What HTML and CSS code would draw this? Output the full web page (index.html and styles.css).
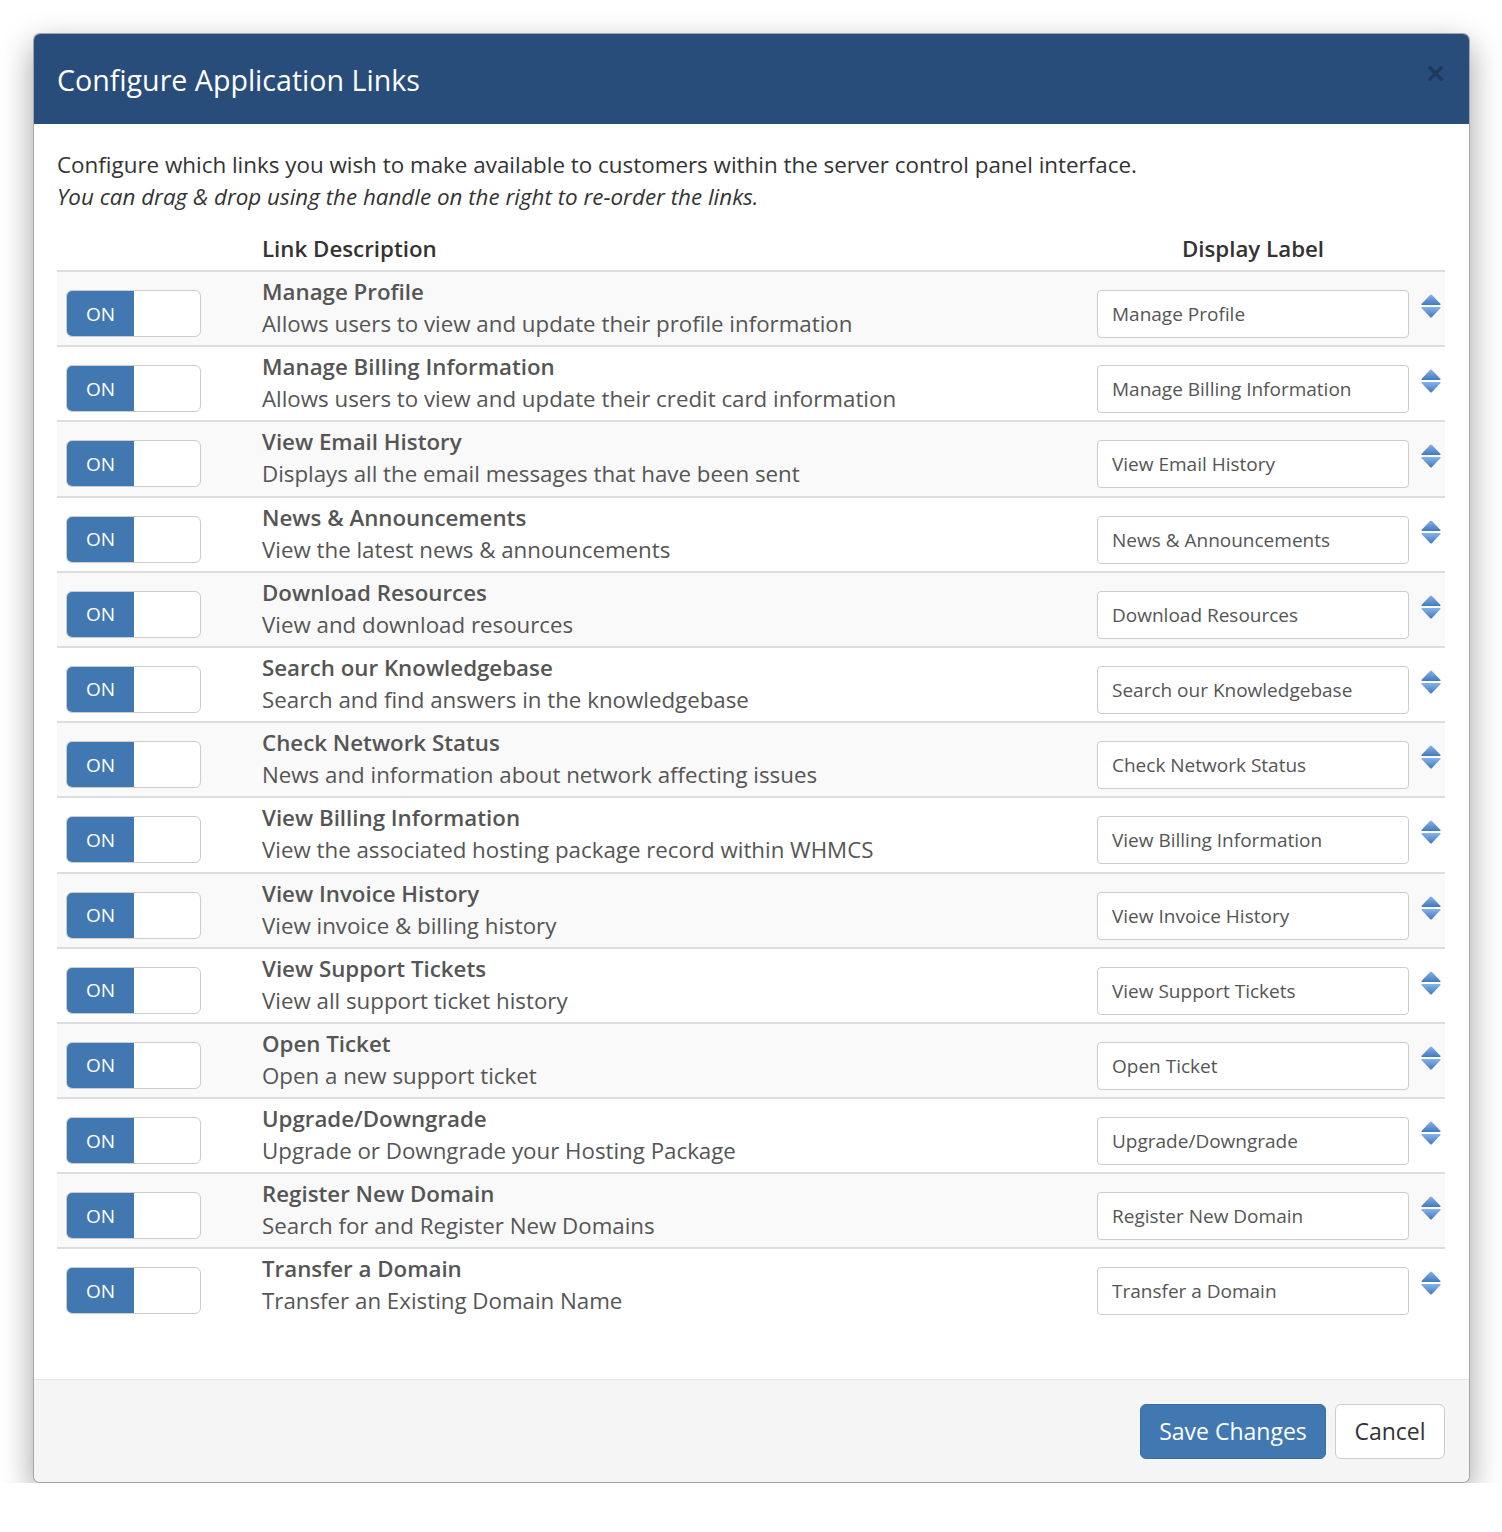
FILE: index.html
```html
<!DOCTYPE html>
<html lang="en">
<head>
  <meta charset="UTF-8">
  <title>Configure Application Links</title>
  <link rel="stylesheet" href="styles.css">
</head>
<body>
  <div class="modal">
    <div class="modal-header">
      <h2>Configure Application Links</h2>
      <button class="close" type="button">&times;</button>
    </div>
    <div class="modal-body">
      <p class="intro">Configure which links you wish to make available to customers within the server control panel interface.<br>
        <em>You can drag &amp; drop using the handle on the right to re-order the links.</em></p>
      <table class="links">
        <thead>
          <tr>
            <th class="col-switch"></th>
            <th class="col-desc">Link Description</th>
            <th class="col-label">Display Label</th>
            <th class="col-handle"></th>
          </tr>
        </thead>
        <tbody id="linkRows"></tbody>
      </table>
    </div>
    <div class="modal-footer">
      <button class="btn btn-primary" type="button">Save Changes</button>
      <button class="btn btn-default" type="button">Cancel</button>
    </div>
  </div>
  <script>
    // links shown in the list
    const links = [
      ["Manage Profile", "Allows users to view and update their profile information"],
      ["Manage Billing Information", "Allows users to view and update their credit card information"],
      ["View Email History", "Displays all the email messages that have been sent"],
      ["News & Announcements", "View the latest news & announcements"],
      ["Download Resources", "View and download resources"],
      ["Search our Knowledgebase", "Search and find answers in the knowledgebase"],
      ["Check Network Status", "News and information about network affecting issues"],
      ["View Billing Information", "View the associated hosting package record within WHMCS"],
      ["View Invoice History", "View invoice & billing history"],
      ["View Support Tickets", "View all support ticket history"],
      ["Open Ticket", "Open a new support ticket"],
      ["Upgrade/Downgrade", "Upgrade or Downgrade your Hosting Package"],
      ["Register New Domain", "Search for and Register New Domains"],
      ["Transfer a Domain", "Transfer an Existing Domain Name"]
    ];

    const handleSvg = `
      <svg width="22" height="26" viewBox="0 0 22 26">
        <defs>
          <linearGradient id="hg" x1="0" y1="0" x2="0" y2="1">
            <stop offset="0" stop-color="#86b3e8"/>
            <stop offset="1" stop-color="#4379bd"/>
          </linearGradient>
        </defs>
        <path d="M10 2 Q11 1 12 2 L20.3 10.8 Q21.2 12 19.8 12 L2.2 12 Q0.8 12 1.7 10.8 Z" fill="url(#hg)"/>
        <path d="M2.2 14 L19.8 14 Q21.2 14 20.3 15.2 L12 24 Q11 25 10 24 L1.7 15.2 Q0.8 14 2.2 14 Z" fill="url(#hg)"/>
      </svg>`;

    const esc = s => s.replace(/&/g, "&amp;").replace(/"/g, "&quot;");

    const tbody = document.getElementById("linkRows");
    links.forEach(([title, desc]) => {
      const tr = document.createElement("tr");
      tr.innerHTML = `
        <td class="col-switch">
          <div class="switch"><span class="switch-on">ON</span><span class="switch-off"></span></div>
        </td>
        <td class="col-desc">
          <div class="link-title">${esc(title)}</div>
          <div class="link-text">${esc(desc)}</div>
        </td>
        <td class="col-label"><input type="text" value="${esc(title)}"></td>
        <td class="col-handle"><span class="handle">${handleSvg}</span></td>
      `;
      tbody.appendChild(tr);
    });
  </script>
</body>
</html>
```

FILE: styles.css
```css
body {
  margin: 0;
  background: #fff;
  font-family: 'Open Sans', 'Noto Sans', Arial, sans-serif;
  color: #333;
}
.modal {
  margin: 33px 32px 0 33px;
  width: 1437px;
  border: 1px solid rgba(0, 0, 0, 0.35);
  border-radius: 7px;
  box-shadow: 0 12px 32px rgba(0, 0, 0, 0.38);
  background: #fff;
  overflow: hidden;
  box-sizing: border-box;
}
.modal-header {
  background: #284d7b;
  height: 90px;
  display: flex;
  align-items: center;
  justify-content: space-between;
  padding: 0 24px 0 23px;
}
.modal-header h2 {
  margin: 0;
  color: #fff;
  font-weight: normal;
  font-size: 28.6px;
  padding-bottom: 0;
}
.close {
  background: none;
  border: none;
  color: rgba(0, 0, 0, 0.25);
  font-size: 32px;
  font-weight: bold;
  font-family: 'Liberation Sans', Arial, sans-serif;
  padding: 0;
  line-height: 1;
  margin-right: 0;
  margin-bottom: 12px;
  cursor: pointer;
}
.modal-body {
  padding: 25px 24px 56px 23px;
}
.intro {
  margin: 0 0 15px 0;
  font-size: 22.4px;
  line-height: 32px;
}
.links {
  width: 100%;
  border-collapse: collapse;
}
.links th {
  text-align: left;
  font-size: 22.3px;
  font-weight: 600;
  line-height: 32px;
  padding: 5px 0 5px 0;
  border-bottom: 2px solid #ddd;
}
.links th.col-label {
  text-align: center;
}
.links td {
  vertical-align: top;
  border-top: 2px solid #ddd;
  padding: 0;
}
.links tbody tr:first-child td {
  border-top: none;
}
.links tbody tr:nth-child(odd) {
  background: #f9f9f9;
}
.col-switch {
  width: 205px;
}
.links td.col-switch {
  width: 196px;
  padding: 18px 0 0 9px;
}
.links td.col-desc {
  padding: 4px 0 5.2px 0;
  color: #555;
  font-size: 22.3px;
  line-height: 32px;
}
.link-title {
  font-weight: 600;
}
.col-label {
  width: 312px;
}
.links td.col-label {
  padding-top: 18px;
}
.col-handle {
  width: 36px;
}
.links td.col-handle {
  width: 25px;
  padding: 23px 0 0 11px;
}
.switch {
  display: flex;
  width: 135px;
  height: 47px;
  border: 1px solid #ccc;
  border-radius: 6px;
  overflow: hidden;
  box-sizing: border-box;
  background: #fff;
}
.switch-on {
  width: 67px;
  background: #4178b1;
  color: #fff;
  font-size: 19px;
  display: flex;
  align-items: center;
  justify-content: center;
}
.switch-off {
  flex: 1;
}
.col-label input {
  width: 312px;
  height: 48px;
  box-sizing: border-box;
  border: 1px solid #ccc;
  border-radius: 4px;
  padding: 0 14px;
  font-family: inherit;
  font-size: 19px;
  color: #555;
  background: #fff;
}
.handle {
  display: block;
  width: 22px;
  height: 26px;
  margin-top: -2px;
}
.modal-footer {
  background: #f5f5f5;
  border-top: 1px solid #e5e5e5;
  padding: 24px 24px 23px 0;
  display: flex;
  justify-content: flex-end;
  gap: 9px;
}
.btn {
  height: 55px;
  border-radius: 6px;
  font-family: inherit;
  font-size: 23px;
  padding: 0;
  white-space: nowrap;
  cursor: pointer;
}
.btn-primary {
  background: #4178b1;
  border: 1px solid #3a6ea5;
  color: #fff;
  width: 186px;
}
.btn-default {
  background: #fff;
  border: 1px solid #ccc;
  color: #333;
  width: 110px;
}
```
